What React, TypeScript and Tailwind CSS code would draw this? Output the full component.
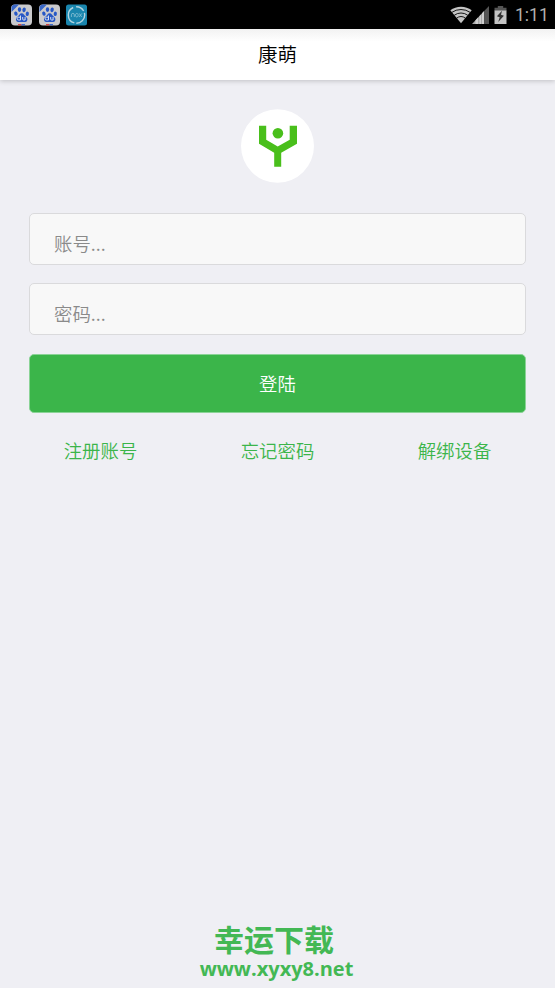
import { useState } from 'react';

interface FieldProps {
  type: string;
  placeholder: string;
  value: string;
  onChange: (value: string) => void;
}

const links = ['注册账号', '忘记密码', '解绑设备'];

function PawIcon() {
  return (
    <svg width="21" height="22" viewBox="0 0 21 22">
      <rect x="0" y="0.5" width="21" height="21" rx="4" fill="#c9c9cc" />
      <path d="M0.5 8V4a3.5 3.5 0 0 1 3.5-3.5h4z" fill="#3a68c8" />
      <g fill="#2657c6">
        <ellipse cx="4.9" cy="9.6" rx="1.7" ry="2.2" transform="rotate(-15 4.9 9.6)" />
        <ellipse cx="8.5" cy="5.6" rx="1.7" ry="2.4" />
        <ellipse cx="13.1" cy="5.8" rx="1.7" ry="2.4" transform="rotate(10 13.1 5.8)" />
        <ellipse cx="16.3" cy="9.8" rx="1.6" ry="2.2" transform="rotate(12 16.3 9.8)" />
        <path d="M10.7 9.2c2 0 2.5 2 4 3.4 1.6 1.4 2.2 2.7 1.4 4.2-1 1.9-3.2 1.1-5.4 1.1s-4.4.8-5.4-1.1c-.8-1.5-.2-2.8 1.4-4.2 1.5-1.4 2-3.4 4-3.4z" />
      </g>
      <path
        d="M9.5 11.5v4.5H7.6a1.3 1.3 0 0 1 0-2.8h1.9M11.7 13v2.2q0 .8.8.8h1.6v-3"
        fill="none"
        stroke="#d5dcec"
        strokeWidth="1"
      />
      <path d="M7 20.7h3.5" stroke="#d6423d" strokeWidth="1.3" />
      <path d="M10.5 20.7H14" stroke="#3a68c8" strokeWidth="1.3" />
    </svg>
  );
}

function RoxIcon() {
  return (
    <svg width="21" height="22" viewBox="0 0 21 22">
      <rect x="0" y="0.5" width="21" height="21" rx="2.5" fill="#1a86ae" />
      <circle cx="10.5" cy="11" r="8.2" fill="none" stroke="#b4d4e0" strokeWidth="1.4" strokeDasharray="13 2 20 3 9 2" />
      <path
        d="M5.4 13v-2.2q0-1.4 1.5-1.4t1.400 1.400V13M10.8 9.400a1.400 1.800 0 1 0 .01 0M13.200 9.400l2.500 3.600M15.900 9.400l-2.900 3.600"
        fill="none"
        stroke="#8cc3d5"
        strokeWidth="0.8"
      />
    </svg>
  );
}

function WifiIcon() {
  return (
    <svg width="22" height="18" viewBox="0 0 22 18">
      <path d="M11 17.2 0.3 4.2Q5 0.7 11 0.7T21.7 4.2z" fill="#c4c4c4" />
      <g fill="none" stroke="#000" strokeWidth="0.9">
        <path d="M1.8 6.4Q6 3.500 11 3.500t9.200 2.900" />
        <path d="M4.200 9.300Q7.300 7 11 7t6.800 2.300" />
        <path d="M6.600 12.200q2-1.700 4.400-1.700t4.400 1.700" />
      </g>
    </svg>
  );
}

function SignalIcon() {
  return (
    <svg width="17" height="18" viewBox="0 0 17 18">
      <path d="M0 18 12.200 5v13z" fill="#a8a8a8" />
      <path d="M3.500 18v-3.700L6 11.600V18zM7.500 18v-8L9 8.400V18zM10 18V7.300L12.200 5v13z" fill="#cfcfcf" />
      <path d="M12.200 18V5L17 0v18z" fill="#555" />
    </svg>
  );
}

function BatteryIcon() {
  return (
    <svg width="13" height="18" viewBox="0 0 13 18">
      <path d="M0.5 1.8h3.3V0h5.4v1.8h3.3V5h-12z" fill="#555" />
      <path d="M0.500 4.500h12V18h-12z" fill="#c4c4c4" />
      <path d="M8 4.800 2.900 10.300l2.800.9-1.500 4.700 5.700-6.200-2.900-.9z" fill="#333" />
    </svg>
  );
}

function StatusBar() {
  return (
    <div className="flex h-[29px] items-center bg-black pr-[7px] pl-[11px]">
      <div className="flex flex-1 gap-[6.5px]">
        <PawIcon />
        <PawIcon />
        <RoxIcon />
      </div>
      <div className="flex items-center">
        <WifiIcon />
        <SignalIcon />
        <div className="ml-[5px]">
          <BatteryIcon />
        </div>
        <span className="ml-[8px] w-[33px] pt-[2px] font-[Roboto,sans-serif] text-[17.5px] font-normal whitespace-nowrap text-[#b0b0b0]">
          1:11
        </span>
      </div>
    </div>
  );
}

function Logo() {
  return (
    <svg width="73" height="74" viewBox="0 0 73 74">
      <ellipse cx="36.5" cy="37" rx="36.5" ry="36.800" fill="#fff" />
      <g fill="#49bf1b">
        <circle cx="36.900" cy="24.300" r="5.300" />
        <path d="M18 16.700h7.200v14L36.700 37.500l12-6.800v-14H56v18l-15.800 9v14h-7v-14L18 34.700z" />
      </g>
    </svg>
  );
}

function Field({ type, placeholder, value, onChange }: FieldProps) {
  return (
    <input
      type={type}
      placeholder={placeholder}
      value={value}
      onChange={(e) => onChange(e.target.value)}
      className="block h-[52px] w-full rounded-[5px] border border-[#dadadc] bg-[#f8f8f8] px-[24px] pt-[8px] text-[18.4px] outline-none placeholder:text-[#8a8a8a]"
    />
  );
}

export default function App() {
  const [account, setAccount] = useState('');
  const [password, setPassword] = useState('');

  return (
    <div className="flex h-[988px] flex-col bg-[#efeff4] font-['Noto_Sans_CJK_SC',sans-serif] font-[350]">
      <StatusBar />
      <header className="flex h-[51px] shrink-0 items-center justify-center bg-linear-to-b from-[#f2f2f2] via-white via-25% to-white pb-[2px] text-[19.5px] text-black shadow-[0_1px_5px_rgba(0,0,0,0.2)]">
        康萌
      </header>

      <main className="flex flex-1 flex-col px-[29px] pt-[29px]">
        <div className="flex justify-center">
          <Logo />
        </div>
        <div className="mt-[29.5px] flex flex-col gap-[18.500px]">
          <Field type="text" placeholder="账号..." value={account} onChange={setAccount} />
          <Field type="password" placeholder="密码..." value={password} onChange={setPassword} />
        </div>
        <button className="mt-[19px] h-[59px] rounded-[5px] border border-[#8bd397] bg-[#3bb54a] text-[18.4px] text-white">
          登陆
        </button>
        <div className="-mx-[17px] mt-[23px] grid grid-cols-3 text-center text-[18.4px] leading-[28px] text-[#3bb54a]">
          {links.map((link) => (
            <a key={link} href="#">
              {link}
            </a>
          ))}
        </div>
      </main>

      <footer className="flex flex-col items-center pb-[7px] text-[#43b854]">
        <div className="pr-[7px] pb-[2px] text-[30px] leading-[34px] font-bold">幸运下载</div>
        <div className="pr-[2px] font-['Open_Sans','Noto_Sans',sans-serif] text-[20px] leading-[24px] font-bold">
          www.xyxy8.net
        </div>
      </footer>
    </div>
  );
}
